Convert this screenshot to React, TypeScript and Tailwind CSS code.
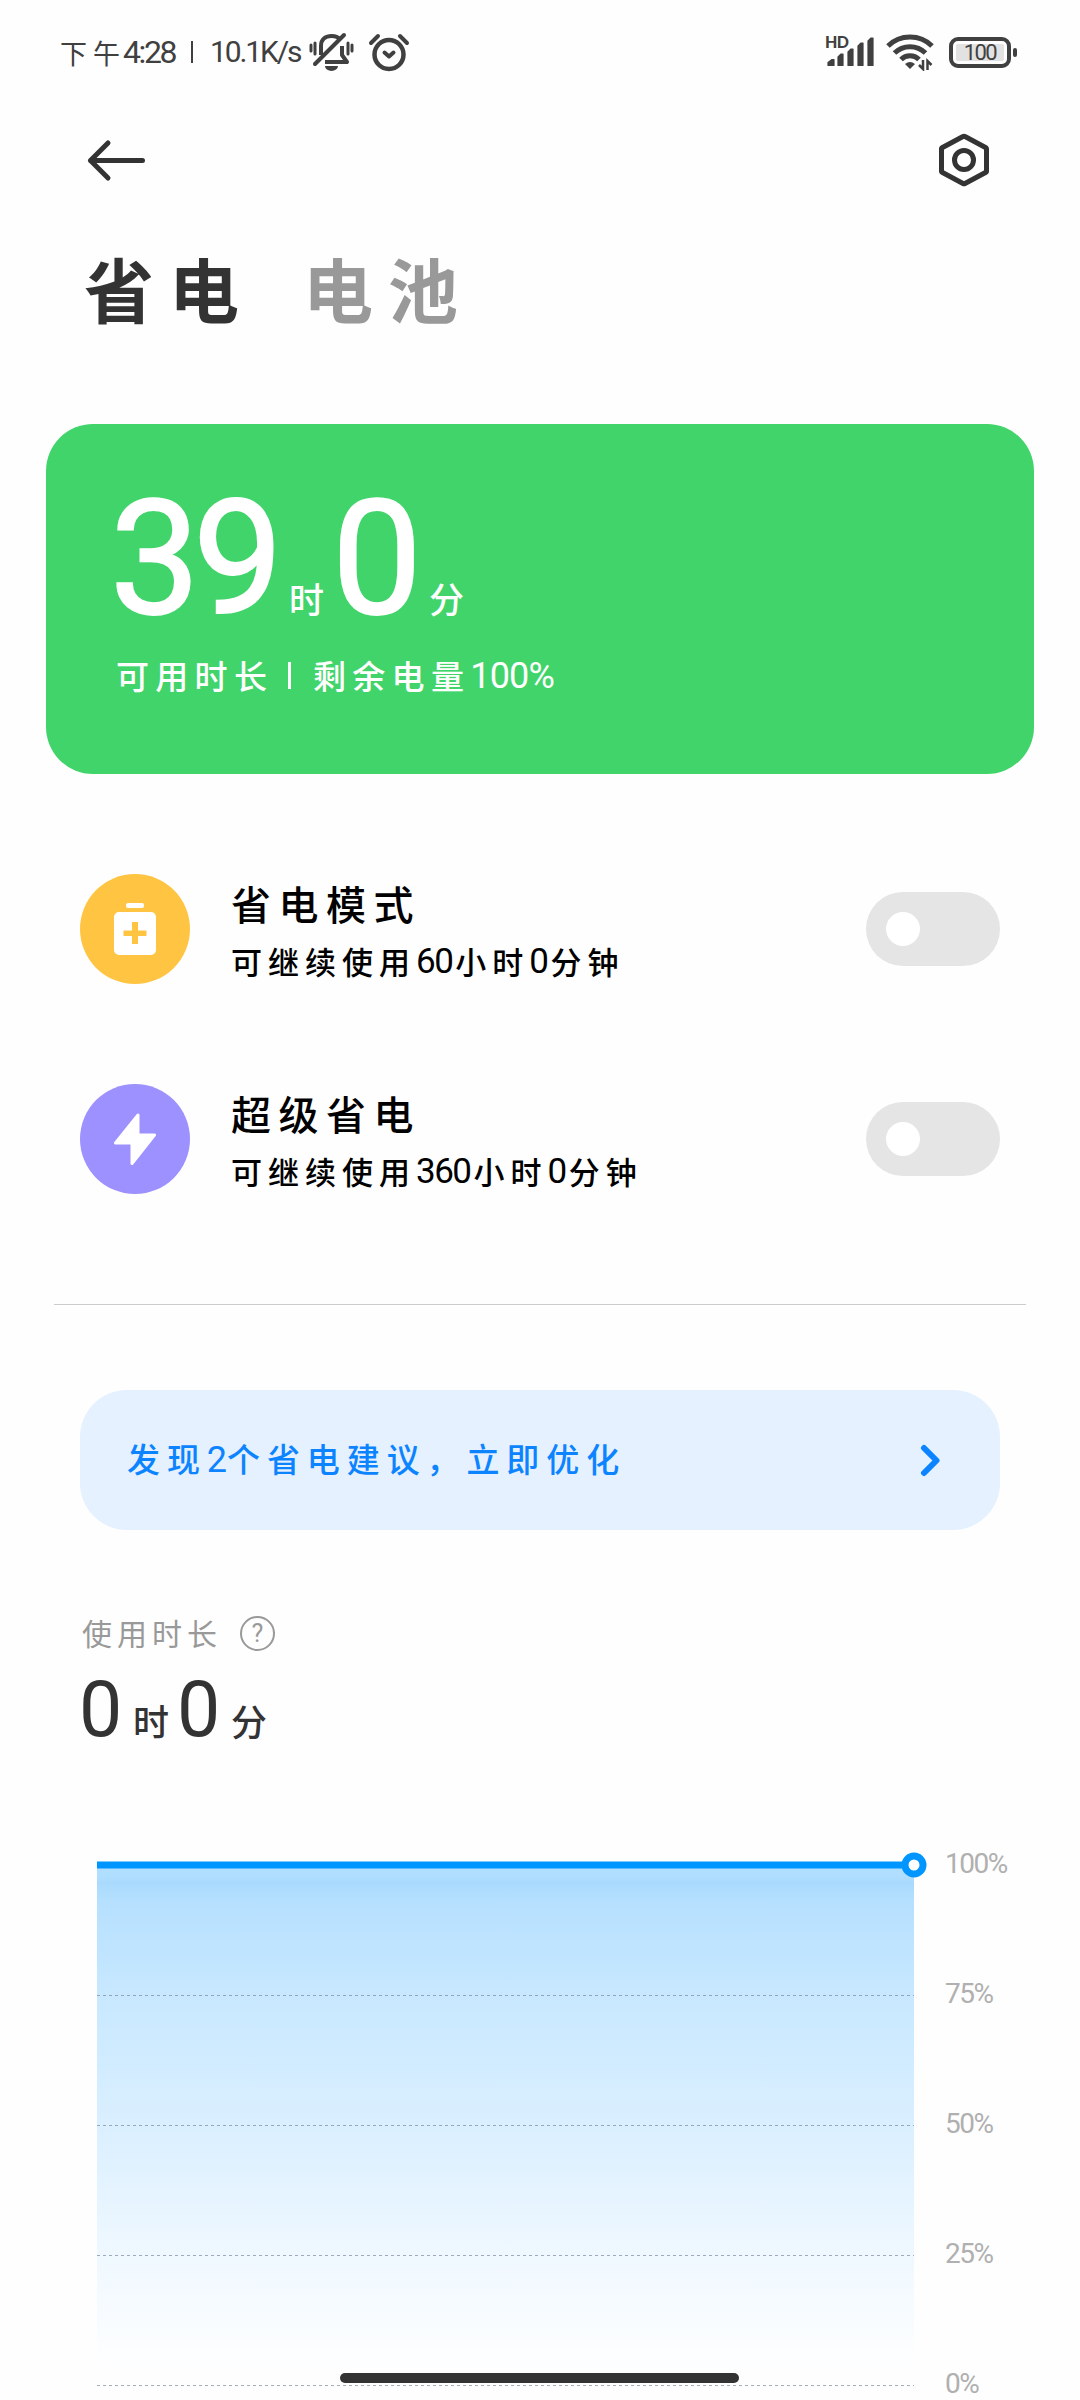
import { ReactNode } from "react";

interface ModeRowProps {
  icon: ReactNode;
  color: string;
  title: string;
  hours: string;
}

const LEVELS = ["100%", "75%", "50%", "25%", "0%"];
const GRID_LINES = [197, 327, 457, 587];

function StatusBar() {
  return (
    <div className="flex h-[104px] items-center justify-between pl-[60px] pr-[63px] text-[#404040]">
      <div className="flex items-center whitespace-nowrap leading-none">
        <span className="w-[63px] shrink-0 text-[27px] tracking-[6px]">下午</span>
        <span className="w-[68px] shrink-0 font-[Roboto] text-[32px] tracking-[-2.4px]">4:28</span>
        <span className="mr-[17px] h-[22px] w-[2px] bg-[#404040]" />
        <span className="w-[99px] shrink-0 font-[Roboto] text-[30px] tracking-[-2.1px]">10.1K/s</span>
        <svg width="46" height="40" viewBox="0 0 46 40" fill="none" stroke="#404040" className="mr-[13px] shrink-0">
          <path d="M2 13v6M6 11v11M39 11v11M43 13v6" strokeWidth="3" strokeLinecap="round" />
          <path d="M12 23V14C12 7 17 4 22.500 4c4 0 7 1 9 4M33 14v9l5 7H16" strokeWidth="4" strokeLinejoin="round" />
          <path d="M6 32L35 3" strokeWidth="4" strokeLinecap="round" />
          <path d="M16 34h13a6.500 5 0 0 1-13 0z" fill="#404040" stroke="none" />
        </svg>
        <svg width="42" height="40" viewBox="0 0 42 40" fill="none" stroke="#404040" strokeLinecap="round" className="shrink-0">
          <circle cx="21" cy="22.500" r="14.500" strokeWidth="4.500" />
          <path d="M3 11l7-7M39 11l-7-7" strokeWidth="4" />
          <path d="M16.500 20.500l4.500 4 4.500-4" strokeWidth="4" strokeLinejoin="round" />
        </svg>
      </div>
      <div className="flex items-center">
        <svg width="52" height="36" viewBox="0 0 52 36" fill="#404040" className="mr-[9px] overflow-visible">
          <text x="0" y="14" fontFamily="Lato" fontWeight="900" fontSize="16" textLength="24">HD</text>
          <path d="M3 31.500v-3l4-3h2v6zM13 31.500V23l3-3h2v11.500zM23 31.500V18l3-3h2v16.500zM33 31.500V12l3-3h2v22.500zM43 31.500V7l3-3h2v27.500z" stroke="#404040" strokeWidth="1.200" strokeLinejoin="round" />
        </svg>
        <svg width="49" height="38" viewBox="0 0 49 38" fill="none" stroke="#404040" strokeWidth="5" className="mr-[14px]">
          <path d="M2 13C14 1 34 1 46 13M8.500 20C17 11.500 31 11.500 39.500 20M15 26.500c5-5 13-5 18 0" />
          <path d="M19 31q5-4 10 0l-5 5z" fill="#404040" stroke="none" />
          <path d="M37 27v9l-4-4M41.500 37v-9l4 4" strokeWidth="2.500" />
        </svg>
        <div className="flex h-[31px] w-[62px] items-center justify-center rounded-[9px] border-4 border-[#404040]">
          <span className="h-[17px] w-[48px] rounded-[2px] bg-[#e2e2e2] text-center font-[Roboto] text-[22px] leading-[18px] tracking-[-1.6px]">100</span>
        </div>
        <span className="ml-[2px] h-[9px] w-[4px] rounded-[2px] bg-[#404040]" />
      </div>
    </div>
  );
}

function ModeRow({ icon, color, title, hours }: ModeRowProps) {
  return (
    <div className="flex h-[210px] items-center px-[80px]">
      <div className="flex h-[110px] w-[110px] items-center justify-center rounded-full" style={{ background: color }}>
        {icon}
      </div>
      <div className="ml-[41px] flex-1 pt-[8px] text-black">
        <div className="text-[40px] font-medium leading-[56px] tracking-[7.5px]">{title}</div>
        <div className="flex items-center text-[31px] font-medium leading-[58px] tracking-[6px]">
          可继续使用
          <span className="pt-[2px] font-[Roboto] text-[35px] font-normal tracking-[-1.5px]">{hours}</span>
          <span className="ml-[3px]">小时</span>
          <span className="pt-[2px] font-[Roboto] text-[35px] font-normal tracking-[-1.5px]">0</span>
          <span className="ml-[3px]">分钟</span>
        </div>
      </div>
      <button className="flex h-[74px] w-[134px] items-center rounded-full bg-[#e5e5e5] pl-[20px]">
        <span className="h-[34px] w-[34px] rounded-full bg-white" />
      </button>
    </div>
  );
}

function Chart() {
  return (
    <div className="mt-[50px] flex pl-[97px]">
      <svg width="848" height="602" viewBox="0 0 848 602" fill="none">
        <defs>
          <linearGradient id="level" x1="0" y1="67" x2="0" y2="587" gradientUnits="userSpaceOnUse">
            <stop offset="0" stopColor="#b2dfff" />
            <stop offset="0.02" stopColor="#b0deff" />
            <stop offset="0.035" stopColor="#a9dafd" />
            <stop offset="0.07" stopColor="#b6e0ff" />
            <stop offset="0.25" stopColor="#c8e8ff" />
            <stop offset="0.5" stopColor="#daefff" />
            <stop offset="0.75" stopColor="#eff8ff" />
            <stop offset="0.95" stopColor="#fdfeff" />
            <stop offset="1" stopColor="#fefefe" />
          </linearGradient>
        </defs>
        <rect y="67" width="817" height="520" fill="url(#level)" />
        {GRID_LINES.map((y) => (
          <path key={y} d={`M0 ${y + 0.5}H817`} stroke="#64788c" strokeOpacity="0.6" strokeDasharray="3 3" />
        ))}
        <path d="M0 67H817" stroke="#0095ff" strokeWidth="7" />
        <circle cx="817" cy="67" r="9" fill="#fff" stroke="#0095ff" strokeWidth="7" />
      </svg>
      <div className="pt-px font-[Roboto] text-[28px] tracking-[-1.5px] text-[#b0b0b0]">
        {LEVELS.map((level) => (
          <div key={level} className="h-[130px] leading-[130px]">{level}</div>
        ))}
      </div>
    </div>
  );
}

export default function App() {
  return (
    <div className="relative h-[2400px] w-[1080px] overflow-hidden bg-[#fefefe] font-['Noto_Sans_CJK_SC',sans-serif] text-[#333]">
      <StatusBar />

      <div className="flex h-[112px] items-center justify-between pl-[86px] pr-[89px]">
        <svg width="60" height="44" viewBox="0 0 60 44" fill="none" stroke="#333" strokeWidth="5" strokeLinecap="round" strokeLinejoin="round">
          <path d="M56.500 22.500H4.500M22 5L4.500 22.500 22 40" />
        </svg>
        <svg width="54" height="56" viewBox="0 0 54 56" fill="none" stroke="#333" strokeWidth="5" strokeLinejoin="round">
          <path d="M26 4.500a2 2 0 0 1 2 0L48.500 15.500a2 2 0 0 1 1 2v21a2 2 0 0 1-1 2L28 51.500a2 2 0 0 1-2 0L5.500 40.500a2 2 0 0 1-1-2v-21a2 2 0 0 1 1-2z" />
          <circle cx="27" cy="28" r="9.500" />
        </svg>
      </div>

      {/* Tabs */}
      <div className="flex h-[148px] items-center pb-[4px] pl-[84px] text-[70px] font-bold leading-none tracking-[15px]">
        <span className="w-[219px]">省电</span>
        <span className="text-[#999]">电池</span>
      </div>

      {/* Remaining time */}
      <div className="mx-[46px] mt-[60px] h-[350px] rounded-[47px] bg-[#41d46a] pl-[70px] pt-[58px] text-white">
        <div className="flex items-baseline font-[Roboto] text-[160px] leading-[154px] tracking-[-7px]">
          <span className="-ml-[6px] w-[179px] [-webkit-text-stroke:2px_white]">39</span>
          <span className="w-[43px] font-['Noto_Sans_CJK_SC'] text-[35px] font-medium leading-none tracking-normal">时</span>
          <span className="w-[97px] [-webkit-text-stroke:2px_white]">0</span>
          <span className="font-['Noto_Sans_CJK_SC'] text-[35px] font-medium leading-none tracking-normal">分</span>
        </div>
        <div className="mt-[13px] flex items-center text-[33px] font-medium leading-[50px] tracking-[6.3px]">
          <span className="w-[172px]">可用时长</span>
          <span className="mr-[22px] h-[27px] w-[3px] bg-white" />
          剩余电量
          <span className="pt-[2px] font-[Roboto] text-[36px] font-normal tracking-[-0.8px]">100%</span>
        </div>
      </div>

      <div className="mt-[50px]">
        <ModeRow
          color="#ffc542"
          title="省电模式"
          hours="60"
          icon={
            <svg width="42" height="54" viewBox="0 0 42 54" fill="#fff">
              <rect x="12" y="1" width="18" height="5" rx="2" />
              <path fillRule="evenodd" d="M5 10h32a5 5 0 0 1 5 5v33a5 5 0 0 1-5 5H5a5 5 0 0 1-5-5V15a5 5 0 0 1 5-5zm13 10v8.500h-8.500v5.500H18v8h6v-8h8.500v-5.500H24V20z" />
            </svg>
          }
        />
        <ModeRow
          color="#9d90ff"
          title="超级省电"
          hours="360"
          icon={
            <svg width="42" height="54" viewBox="0 0 42 54" fill="#fff" stroke="#fff" strokeWidth="3" strokeLinejoin="round">
              <path d="M24 3L1.500 31H18v20.500L40.500 23H24z" />
            </svg>
          }
        />
      </div>

      <div className="mx-[54px] mt-[60px] h-px bg-[#ccc]" />

      {/* Suggestions */}
      <button className="mx-[80px] mt-[85px] flex h-[140px] w-[920px] items-center justify-between rounded-[47px] bg-[#e5f1ff] pl-[47px] pr-[58px] text-[33px] font-medium tracking-[6.9px] text-[#0d84ff]">
        <span>
          发现<span className="font-[Roboto] text-[36px] font-normal tracking-normal">2</span>个省电建议，立即优化
        </span>
        <svg width="22" height="34" viewBox="0 0 22 34" fill="none" stroke="#0d84ff" strokeWidth="6" strokeLinecap="round" strokeLinejoin="round">
          <path d="M4 5l12.500 12.500L4 30" />
        </svg>
      </button>

      {/* Usage */}
      <div className="mt-[81px] flex h-[44px] items-center pl-[82px] text-[30px] leading-[42px] tracking-[5px] text-[#999]">
        <span className="w-[158px] pb-[3px]">使用时长</span>
        <span className="flex h-[35px] w-[35px] items-center justify-center rounded-full border-2 border-[#999] font-[Roboto] text-[25px] leading-none tracking-normal">?</span>
      </div>
      <div className="mt-[17px] flex items-baseline pl-[79px] font-[Roboto] text-[77px] leading-[76px]">
        <span className="w-[54px]">0</span>
        <span className="w-[44px] font-['Noto_Sans_CJK_SC'] text-[36px] font-medium leading-none">时</span>
        <span className="w-[54px]">0</span>
        <span className="font-['Noto_Sans_CJK_SC'] text-[36px] font-medium leading-none">分</span>
      </div>

      <Chart />

      <div className="absolute bottom-[17px] left-[340px] h-[10px] w-[399px] rounded-full bg-[#333]" />
    </div>
  );
}
